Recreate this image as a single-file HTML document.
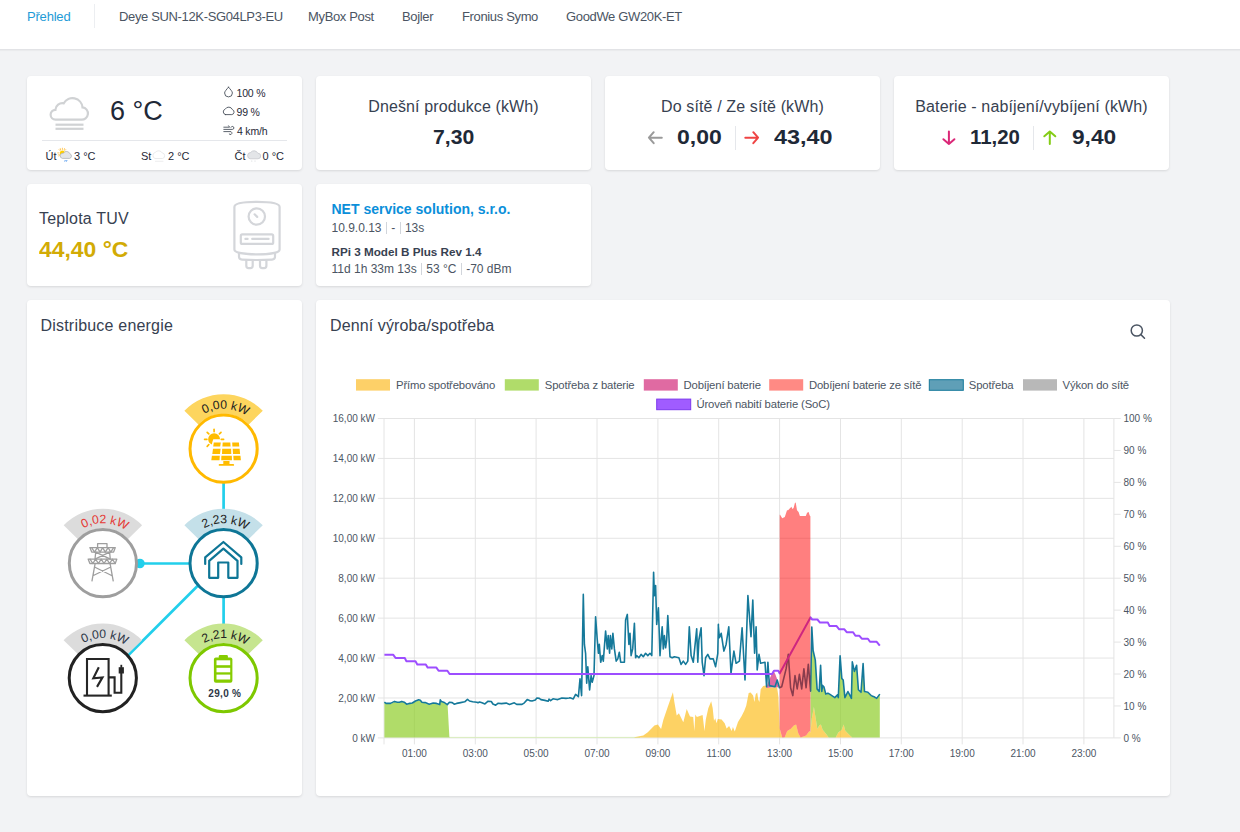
<!DOCTYPE html>
<html><head><meta charset="utf-8"><title>Přehled</title>
<style>
*{box-sizing:border-box}
html,body{margin:0;padding:0;width:1240px;height:832px;overflow:hidden;background:#f2f3f5;font-family:"Liberation Sans", sans-serif;color:#1f2937}
.hdr{position:absolute;left:0;top:0;width:1240px;height:50px;background:#fff;border-bottom:1px solid #e2e3e6;box-shadow:0 1px 1px rgba(0,0,0,.03)}
.nav{position:absolute;top:9px;font-size:13px;line-height:15px;color:#4b5563;white-space:nowrap;letter-spacing:-0.35px}
.sep{position:absolute;left:94px;top:4px;width:1px;height:24px;background:#eceef1}
.card{position:absolute;background:#fff;border-radius:4px;box-shadow:0 1px 3px rgba(0,0,0,.08),0 1px 2px rgba(0,0,0,.04)}
.t{position:absolute;white-space:nowrap}
.title{font-size:16px;line-height:17px;color:#374151;letter-spacing:0.12px}
.val{font-size:20px;line-height:22px;font-weight:700;color:#1f2937;letter-spacing:1.6px}
svg text{font-family:"Liberation Sans", sans-serif}
.vs{display:inline-block;width:1px;height:12px;background:#d1d5db;vertical-align:-2px;margin:0 1px}
</style></head><body>
<div class="hdr">
<div class="nav" style="left:27px;color:#1e9bd7;letter-spacing:-0.2px">Přehled</div>
<div class="sep"></div>
<div class="nav" style="left:119px">Deye SUN-12K-SG04LP3-EU</div>
<div class="nav" style="left:308px">MyBox Post</div>
<div class="nav" style="left:402px">Bojler</div>
<div class="nav" style="left:462px">Fronius Symo</div>
<div class="nav" style="left:566px">GoodWe GW20K-ET</div>
</div>

<div class="card" style="left:27px;top:76px;width:275px;height:94px"></div>
<div class="card" style="left:316px;top:76px;width:275px;height:94px"></div>
<div class="card" style="left:605px;top:76px;width:275px;height:94px"></div>
<div class="card" style="left:894px;top:76px;width:275px;height:94px"></div>
<div class="card" style="left:27px;top:184px;width:275px;height:102px"></div>
<div class="card" style="left:316px;top:184px;width:275px;height:102px"></div>
<div class="card" style="left:27px;top:299.5px;width:275px;height:496.5px"></div>
<div class="card" style="left:316px;top:299.5px;width:854px;height:496.5px"></div>

<!-- weather -->
<div class="t" style="left:110px;top:96px;font-size:27px;line-height:30px;color:#1f2937">6 °C</div>
<div class="t" style="left:236.5px;top:86.5px;font-size:10.5px;line-height:12px;color:#1f2937;letter-spacing:-0.2px">100 %</div>
<div class="t" style="left:236.5px;top:105.5px;font-size:10.5px;line-height:12px;color:#1f2937;letter-spacing:-0.2px">99 %</div>
<div class="t" style="left:237px;top:124.5px;font-size:10.5px;line-height:12px;color:#1f2937;letter-spacing:-0.2px">4 km/h</div>
<div style="position:absolute;left:42px;top:140px;width:245px;height:1px;background:#e5e7eb"></div>
<div class="t" style="left:45.5px;top:149.8px;font-size:11px;line-height:13px;color:#1f2937">Út</div>
<div class="t" style="left:74px;top:149.8px;font-size:11px;line-height:13px;color:#1f2937">3 °C</div>
<div class="t" style="left:141px;top:149.8px;font-size:11px;line-height:13px;color:#1f2937">St</div>
<div class="t" style="left:168px;top:149.8px;font-size:11px;line-height:13px;color:#1f2937">2 °C</div>
<div class="t" style="left:234.5px;top:149.8px;font-size:11px;line-height:13px;color:#1f2937">Čt</div>
<div class="t" style="left:262.5px;top:149.8px;font-size:11px;line-height:13px;color:#1f2937">0 °C</div>

<!-- stats -->
<div class="t title" style="left:316px;width:275px;text-align:center;top:98px">Dnešní produkce (kWh)</div>
<div class="t val" style="left:433px;top:126px;letter-spacing:0;transform:scaleX(1.06);transform-origin:0 0">7,30</div>
<div class="t title" style="left:605px;width:275px;text-align:center;top:98px">Do sítě / Ze sítě (kWh)</div>
<div class="t val" style="left:676.5px;top:126px;letter-spacing:0;transform:scaleX(1.15);transform-origin:0 0">0,00</div>
<div class="t val" style="left:774px;top:126px;letter-spacing:0;transform:scaleX(1.17);transform-origin:0 0">43,40</div>
<div style="position:absolute;left:735px;top:125.5px;width:1px;height:24px;background:#e5e7eb"></div>
<div class="t title" style="left:894px;width:275px;text-align:center;top:98px">Baterie - nabíjení/vybíjení (kWh)</div>
<div class="t val" style="left:970px;top:126px;letter-spacing:0;transform:scaleX(1.02);transform-origin:0 0">11,20</div>
<div class="t val" style="left:1071.5px;top:126px;letter-spacing:0;transform:scaleX(1.135);transform-origin:0 0">9,40</div>
<div style="position:absolute;left:1033px;top:125.5px;width:1px;height:24px;background:#e5e7eb"></div>

<div class="t" style="left:39px;top:209.5px;font-size:16px;line-height:18px;color:#374151;letter-spacing:0.18px">Teplota TUV</div>
<div class="t val" style="left:38.5px;top:238.5px;font-size:21.5px;color:#d2ab05;letter-spacing:0;transform:scaleX(1.065);transform-origin:0 0">44,40 °C</div>

<div class="t" style="left:331.5px;top:201px;font-size:14px;line-height:16px;font-weight:700;color:#0b8fda">NET service solution, s.r.o.</div>
<div class="t" style="left:331.5px;top:220.5px;font-size:12px;line-height:14px;color:#4b5563">10.9.0.13 <span class="vs"></span> - <span class="vs"></span> 13s</div>
<div class="t" style="left:331.5px;top:244.5px;font-size:11.7px;line-height:14px;font-weight:700;color:#374151">RPi 3 Model B Plus Rev 1.4</div>
<div class="t" style="left:331.5px;top:261.5px;font-size:12px;line-height:14px;color:#4b5563">11d 1h 33m 13s <span class="vs"></span> 53 °C <span class="vs"></span> -70 dBm</div>

<div class="t title" style="left:40.5px;top:317px;letter-spacing:0.2px">Distribuce energie</div>
<div class="t title" style="left:330px;top:317px;letter-spacing:0.11px">Denní výroba/spotřeba</div>

<svg width="1240" height="832" style="position:absolute;left:0;top:0">
<!-- weather icons -->
<g fill="none" stroke="#d0d2d4" stroke-width="2.2" stroke-linecap="round">
<path d="M55.6,119.6 H81.1 A6.1,6.1 0 0 0 82.5,107.4 A10,10 0 0 0 63.8,103.3 A7,7 0 0 0 55.4,109.8 A4.9,4.9 0 0 0 55.6,119.6 Z"/>
<line x1="55.5" y1="124.7" x2="83.5" y2="124.7" stroke-linecap="butt"/><line x1="55.5" y1="128.8" x2="83.5" y2="128.8" stroke-linecap="butt"/>
</g>
<g fill="none" stroke="#3f4753" stroke-width="0.85" stroke-linecap="round">
<path d="M228.5,87.2 C226.5,89.5 224.6,91.5 224.6,93 A3.9,3.9 0 0 0 232.4,93 C232.4,91.5 230.5,89.5 228.5,87.2 Z"/>
<path d="M225.5,114.6 H231.8 A2.6,2.6 0 0 0 232.4,109.6 A4,4 0 0 0 225.2,109.2 A2.8,2.8 0 0 0 225.5,114.6 Z"/>
<path d="M223.8,127.2 H229.6 L228.6,125.8 M223.8,129.4 H232.4 A1.5,1.5 0 1 0 231,127.3 M223.8,131.6 H230 A1.5,1.5 0 1 1 229.2,134"/>
</g>
<g stroke="#ffc34d" stroke-width="0.9" stroke-linecap="round">
<line x1="62.4" y1="149.5" x2="62.4" y2="148.2"/><line x1="59" y1="152.9" x2="57.7" y2="152.9"/><line x1="60" y1="150.5" x2="59.1" y2="149.6"/><line x1="64.8" y1="150.5" x2="65.7" y2="149.6"/><line x1="60" y1="155.3" x2="59.1" y2="156.2"/><line x1="60.6" y1="149.8" x2="60.3" y2="148.6"/><line x1="64.2" y1="149.8" x2="64.5" y2="148.6"/><line x1="59.3" y1="154.6" x2="58.2" y2="155"/>
</g>
<circle cx="62.4" cy="152.9" r="2.5" fill="#ffcf00"/>
<path d="M62.4,158.4 H69.6 A2.4,2.4 0 0 0 69.9,153.8 A3.6,3.6 0 0 0 63.4,153.2 A2.6,2.6 0 0 0 62.4,158.4 Z" fill="#e3e5e8" stroke="#a9adb2" stroke-width="0.7"/>
<line x1="64.7" y1="161.6" x2="65.3" y2="160" stroke="#5b9ff0" stroke-width="1"/><line x1="66.4" y1="161.6" x2="67" y2="160" stroke="#5b9ff0" stroke-width="1"/>
<path d="M155,158.5 H162.5 A2.8,2.8 0 0 0 162.3,153 A4.2,4.2 0 0 0 155.3,152.4 A3.2,3.2 0 0 0 155,158.5 Z" fill="none" stroke="#e3e4e6" stroke-width="0.8"/>
<line x1="155" y1="161.3" x2="163.4" y2="161.3" stroke="#e8e9eb" stroke-width="0.8"/>
<path d="M250,158.8 H258 A2.8,2.8 0 0 0 257.8,153.2 A4.2,4.2 0 0 0 250.6,152.5 A3.2,3.2 0 0 0 250,158.8 Z" fill="#e3e5e8" stroke="#b8bcc2" stroke-width="0.6"/>
<circle cx="251.8" cy="161" r="0.5" fill="#c8ccd0"/><circle cx="255" cy="161" r="0.5" fill="#c8ccd0"/>
</g>
<!-- arrows -->
<g fill="none" stroke-width="2" stroke-linecap="round" stroke-linejoin="round">
<path d="M661.8,137.7 H649 M653.7,132.2 L648.9,137.7 L653.7,143.2" stroke="#9a9a9a"/>
<path d="M745.3,137.7 H758 M753.3,132.2 L758.1,137.7 L753.3,143.2" stroke="#ef4444"/>
<path d="M948.9,131.5 V144 M943.4,139.2 L948.9,144 L954.4,139.2" stroke="#db2777"/>
<path d="M1049.8,144 V131.5 M1044.3,136.3 L1049.8,131.5 L1055.3,136.3" stroke="#84cc16"/>
</g>
<!-- boiler -->
<g fill="none" stroke="#d4d6da" stroke-width="2.2" stroke-linejoin="round" stroke-linecap="round">
<path d="M234.4,249.5 V207 C234.4,203.3 245,201.9 257,201.9 C269,201.9 279.6,203.3 279.6,207 V249.5 C279.6,252.8 269,254.4 257,254.4 C245,254.4 234.4,252.8 234.4,249.5 Z"/>
<circle cx="256.8" cy="216.5" r="8.2"/><line x1="254.6" y1="214.3" x2="257.2" y2="216.9"/>
<rect x="240.8" y="234.4" width="32.4" height="9.5" rx="1.5"/><line x1="245.4" y1="238.9" x2="247.6" y2="238.9"/><line x1="252.2" y1="238.9" x2="268.6" y2="238.9"/>
<path d="M239,253.3 V256.8 Q239,259.4 242,259.6 Q257,260.4 272,259.6 Q275,259.4 275,256.8 V253.3"/>
<path d="M246.3,260.2 V265.8 Q246.3,268.1 248.6,268.1 H250.4 Q252.7,268.1 252.7,265.8 V260.2 M260,260.2 V265.8 Q260,268.1 262.3,268.1 H264.1 Q266.4,268.1 266.4,265.8 V260.2"/>
</g>
<!-- search -->
<g fill="none" stroke="#4b5563" stroke-width="1.5" stroke-linecap="round"><circle cx="1136.8" cy="330.5" r="5.6"/><line x1="1140.9" y1="334.6" x2="1144.5" y2="338.2"/></g>

<!-- distribution -->
<line x1="223.6" y1="483" x2="223.6" y2="512" stroke="#22cfeb" stroke-width="2.7"/>
<line x1="137" y1="563.5" x2="190" y2="563.5" stroke="#22cfeb" stroke-width="2.7"/>
<circle cx="139.9" cy="563.5" r="4.8" fill="#22cfeb"/>
<line x1="223.6" y1="596" x2="223.6" y2="626" stroke="#22cfeb" stroke-width="2.7"/>
<line x1="198" y1="585.5" x2="128" y2="655.5" stroke="#22cfeb" stroke-width="2.7"/>
<path d="M184.40,410.84 A54.5,54.5 0 0 1 262.80,410.84 L248.78,424.39 A35,35 0 0 0 198.42,424.39 Z" fill="#fdd55e"/><path id="arc223448" d="M186.01,435.02 A40,40 0 0 1 261.19,435.02" fill="none"/><text font-size="12.2" fill="#222" font-family='"Liberation Sans", sans-serif'><textPath href="#arc223448" startOffset="52%" text-anchor="middle">0,00 kW</textPath></text><circle cx="223.6" cy="448.7" r="33.6" fill="#fff" stroke="#ffb900" stroke-width="3"/>
<path d="M63.70,525.34 A54.5,54.5 0 0 1 142.10,525.34 L128.08,538.89 A35,35 0 0 0 77.72,538.89 Z" fill="#dcdcdc"/><path id="arc102563" d="M65.31,549.52 A40,40 0 0 1 140.49,549.52" fill="none"/><text font-size="12.2" fill="#e53935" font-family='"Liberation Sans", sans-serif'><textPath href="#arc102563" startOffset="52%" text-anchor="middle">0,02 kW</textPath></text><circle cx="102.9" cy="563.2" r="33.6" fill="#fff" stroke="#9e9e9e" stroke-width="3"/>
<path d="M184.40,525.34 A54.5,54.5 0 0 1 262.80,525.34 L248.78,538.89 A35,35 0 0 0 198.42,538.89 Z" fill="#c4e0e9"/><path id="arc223563" d="M186.01,549.52 A40,40 0 0 1 261.19,549.52" fill="none"/><text font-size="12.2" fill="#222" font-family='"Liberation Sans", sans-serif'><textPath href="#arc223563" startOffset="52%" text-anchor="middle">2,23 kW</textPath></text><circle cx="223.6" cy="563.2" r="33.6" fill="#fff" stroke="#0e7696" stroke-width="3"/>
<path d="M63.60,640.24 A54.5,54.5 0 0 1 142.00,640.24 L127.98,653.79 A35,35 0 0 0 77.62,653.79 Z" fill="#dcdcdc"/><path id="arc102678" d="M65.21,664.42 A40,40 0 0 1 140.39,664.42" fill="none"/><text font-size="12.2" fill="#2d3748" font-family='"Liberation Sans", sans-serif'><textPath href="#arc102678" startOffset="52%" text-anchor="middle">0,00 kW</textPath></text><circle cx="102.8" cy="678.1" r="33.6" fill="#fff" stroke="#222222" stroke-width="3"/>
<path d="M184.40,640.24 A54.5,54.5 0 0 1 262.80,640.24 L248.78,653.79 A35,35 0 0 0 198.42,653.79 Z" fill="#c6e58f"/><path id="arc223678" d="M186.01,664.42 A40,40 0 0 1 261.19,664.42" fill="none"/><text font-size="12.2" fill="#222" font-family='"Liberation Sans", sans-serif'><textPath href="#arc223678" startOffset="52%" text-anchor="middle">2,21 kW</textPath></text><circle cx="223.6" cy="678.1" r="33.6" fill="#fff" stroke="#7ec800" stroke-width="3"/>
<g fill="#ffbc00">
<path d="M208.15,439.3 A5.95,5.95 0 0 1 220.05,439.3 L213.3,439.3 L212.5,441.5 L211.8,444.5 A5.95,5.95 0 0 1 208.15,439.3 Z"/>
<path d="M213.8,442.6 H220.8 L220.2,446.6 H213.2 Z M222.7,442.6 H230.3 L230.6,446.6 H222.4 Z M232.2,442.6 H238.9 L239.3,446.6 H232.4 Z"/>
<path d="M213.0,448.8 H220.6 L220.0,453.9 H212.3 Z M222.2,448.8 H231.1 L231.3,453.9 H222.0 Z M232.7,448.8 H239.6 L240.1,453.9 H233.0 Z"/>
<path d="M211.9,455.8 H219.8 L219.5,460.2 H211.3 Z M221.4,455.8 H231.8 L232.0,460.2 H221.2 Z M233.3,455.8 H240.5 L240.9,460.2 H233.6 Z"/>
<rect x="223.3" y="461" width="6.2" height="3.2"/><rect x="218.7" y="463.9" width="15.4" height="1.9" rx="0.9"/>
</g>
<g stroke="#ffbc00" stroke-width="1.7" stroke-linecap="round">
<line x1="214.1" y1="429.3" x2="214.1" y2="431.6"/><line x1="207.2" y1="432.3" x2="208.8" y2="433.9"/>
<line x1="221" y1="432.3" x2="219.4" y2="433.9"/><line x1="204.6" y1="439.3" x2="206.9" y2="439.3"/>
<line x1="221.3" y1="439.3" x2="223.6" y2="439.3"/><line x1="207.2" y1="446.3" x2="208.8" y2="444.7"/>
</g>
<g fill="none" stroke="#9e9e9e" stroke-width="1.3" stroke-linejoin="round" stroke-linecap="round">
<path d="M97.6,547.4 V543.7 H107 V547.4"/>
<path d="M89.9,547.6 H115.3 L113.6,552.1 H91.7 Z"/>
<path d="M91.7,547.6 L94.5,552.1 L97.3,547.6 L100.1,552.1 L102.6,547.6 L105.3,552.1 L108.1,547.6 L110.8,552.1 L113.6,547.6"/>
<path d="M88.2,559.2 H116.8 L115.2,563.5 H89.9 Z"/>
<path d="M90,559.2 L92.8,563.5 L95.6,559.2 L98.4,563.5 L101.2,559.2 L104,563.5 L106.8,559.2 L109.6,563.5 L112.4,559.2 L115.2,563.5"/>
<path d="M95.7,552.1 L95,559.2 M109.6,552.1 L110.3,559.2 M95.7,552.1 L110.3,559.2 M109.6,552.1 L95,559.2"/>
<path d="M95.1,563.6 L92,580.8 M110.1,563.6 L113.2,580.8 M94.5,567 L111.6,575.5 M110.8,567 L93.4,575.5"/>
</g>
<g fill="none" stroke="#0e7696" stroke-width="2.2" stroke-linejoin="round" stroke-linecap="round">
<path d="M205.2,564 V557.3 L223.4,542 L241.3,557.3 V564"/>
<path d="M209.2,577.8 V560.8 L223.4,548.7 L237.5,560.8 V577.8 H228.3 V562.5 H218.2 V577.8 Z"/>
</g>
<g fill="none" stroke="#262626" stroke-width="2.1" stroke-linejoin="miter">
<path d="M87,695.3 V659 H108.6 V695.3"/>
<path d="M83.5,695.6 H111.8"/>
<path d="M98.8,667.3 L93.3,678.2 L102.5,677.4 L97,686.9"/>
<path d="M108.6,677.4 H114.6 V692.7 H121.3 V672"/>
</g>
<rect x="118.7" y="667.2" width="5.2" height="6.3" fill="#262626"/><rect x="120.4" y="664.8" width="1.8" height="3" fill="#262626"/>
<g fill="#86cc00"><rect x="213.9" y="657.4" width="18.5" height="25.3" rx="2"/><rect x="218.8" y="655.1" width="9.1" height="3.5" rx="1.2"/></g>
<g fill="#fff"><rect x="216.5" y="660.3" width="13.7" height="4.9"/><rect x="216.5" y="667.8" width="13.7" height="4.5"/><rect x="216.5" y="674.6" width="13.7" height="4.9"/></g>
<text x="224.8" y="696.6" text-anchor="middle" font-size="10" font-weight="700" style="letter-spacing:0.3px" fill="#2d3748" font-family='"Liberation Sans", sans-serif'>29,0 %</text>

<!-- legend -->
<g font-size="11.3" fill="#4b5563" style="letter-spacing:-0.15px">
<rect x="356" y="379.2" width="34" height="11.4" fill="#fdd068"/><text x="396" y="388.9">Přímo spotřebováno</text>
<rect x="504.8" y="379.2" width="34" height="11.4" fill="#b0dc6a"/><text x="544.8" y="388.9">Spotřeba z baterie</text>
<rect x="643.8" y="379.2" width="34" height="11.4" fill="#e06aa2"/><text x="683.5" y="388.9">Dobíjení baterie</text>
<rect x="769.2" y="379.2" width="34" height="11.4" fill="#ff8a84"/><text x="808.9" y="388.9">Dobíjení baterie ze sítě</text>
<rect x="929.3" y="379.7" width="34" height="10.6" fill="#5f9fb7" stroke="#15799a" stroke-width="1"/><text x="968.8" y="388.9">Spotřeba</text>
<rect x="1023" y="379.2" width="34" height="11.4" fill="#b8b8b8"/><text x="1062.5" y="388.9">Výkon do sítě</text>
<rect x="656.7" y="399.1" width="34" height="10.6" fill="#a05cff" stroke="#7c3aed" stroke-width="1"/><text x="696.4" y="408.4">Úroveň nabití baterie (SoC)</text>
</g>
<!-- grid -->
<g stroke="#e4e4e4" stroke-width="1">
<line x1="377.8" y1="418.5" x2="1113.9" y2="418.5"/>
<line x1="377.8" y1="458.425" x2="1113.9" y2="458.425"/>
<line x1="377.8" y1="498.35" x2="1113.9" y2="498.35"/>
<line x1="377.8" y1="538.275" x2="1113.9" y2="538.275"/>
<line x1="377.8" y1="578.2" x2="1113.9" y2="578.2"/>
<line x1="377.8" y1="618.125" x2="1113.9" y2="618.125"/>
<line x1="377.8" y1="658.05" x2="1113.9" y2="658.05"/>
<line x1="377.8" y1="697.9749999999999" x2="1113.9" y2="697.9749999999999"/>
<line x1="377.8" y1="737.9" x2="1113.9" y2="737.9"/>
<line x1="384.0" y1="418.5" x2="384.0" y2="744.4"/>
<line x1="414.4" y1="418.5" x2="414.4" y2="744.4"/>
<line x1="475.3" y1="418.5" x2="475.3" y2="744.4"/>
<line x1="536.1" y1="418.5" x2="536.1" y2="744.4"/>
<line x1="597.0" y1="418.5" x2="597.0" y2="744.4"/>
<line x1="657.9" y1="418.5" x2="657.9" y2="744.4"/>
<line x1="718.7" y1="418.5" x2="718.7" y2="744.4"/>
<line x1="779.6" y1="418.5" x2="779.6" y2="744.4"/>
<line x1="840.5" y1="418.5" x2="840.5" y2="744.4"/>
<line x1="901.3" y1="418.5" x2="901.3" y2="744.4"/>
<line x1="962.2" y1="418.5" x2="962.2" y2="744.4"/>
<line x1="1023.0" y1="418.5" x2="1023.0" y2="744.4"/>
<line x1="1083.9" y1="418.5" x2="1083.9" y2="744.4"/>
<line x1="1113.9" y1="418.5" x2="1113.9" y2="737.9"/>
<line x1="1113.9" y1="737.9" x2="1120.7" y2="737.9"/>
<line x1="1113.9" y1="705.9599999999999" x2="1120.7" y2="705.9599999999999"/>
<line x1="1113.9" y1="674.02" x2="1120.7" y2="674.02"/>
<line x1="1113.9" y1="642.0799999999999" x2="1120.7" y2="642.0799999999999"/>
<line x1="1113.9" y1="610.14" x2="1120.7" y2="610.14"/>
<line x1="1113.9" y1="578.1999999999999" x2="1120.7" y2="578.1999999999999"/>
<line x1="1113.9" y1="546.26" x2="1120.7" y2="546.26"/>
<line x1="1113.9" y1="514.3199999999999" x2="1120.7" y2="514.3199999999999"/>
<line x1="1113.9" y1="482.38" x2="1120.7" y2="482.38"/>
<line x1="1113.9" y1="450.43999999999994" x2="1120.7" y2="450.43999999999994"/>
<line x1="1113.9" y1="418.49999999999994" x2="1120.7" y2="418.49999999999994"/>
</g>
<g font-size="10" fill="#4b5563">
<text x="375" y="422.2" text-anchor="end">16,00 kW</text>
<text x="375" y="462.1" text-anchor="end">14,00 kW</text>
<text x="375" y="502.1" text-anchor="end">12,00 kW</text>
<text x="375" y="542.0" text-anchor="end">10,00 kW</text>
<text x="375" y="581.9" text-anchor="end">8,00 kW</text>
<text x="375" y="621.8" text-anchor="end">6,00 kW</text>
<text x="375" y="661.8" text-anchor="end">4,00 kW</text>
<text x="375" y="701.7" text-anchor="end">2,00 kW</text>
<text x="375" y="741.6" text-anchor="end">0 kW</text>
<text x="414.4" y="757" text-anchor="middle">01:00</text>
<text x="475.3" y="757" text-anchor="middle">03:00</text>
<text x="536.1" y="757" text-anchor="middle">05:00</text>
<text x="597.0" y="757" text-anchor="middle">07:00</text>
<text x="657.9" y="757" text-anchor="middle">09:00</text>
<text x="718.7" y="757" text-anchor="middle">11:00</text>
<text x="779.6" y="757" text-anchor="middle">13:00</text>
<text x="840.5" y="757" text-anchor="middle">15:00</text>
<text x="901.3" y="757" text-anchor="middle">17:00</text>
<text x="962.2" y="757" text-anchor="middle">19:00</text>
<text x="1023.0" y="757" text-anchor="middle">21:00</text>
<text x="1083.9" y="757" text-anchor="middle">23:00</text>
<text x="1123.5" y="741.6">0 %</text>
<text x="1123.5" y="709.7">10 %</text>
<text x="1123.5" y="677.7">20 %</text>
<text x="1123.5" y="645.8">30 %</text>
<text x="1123.5" y="613.8">40 %</text>
<text x="1123.5" y="581.9">50 %</text>
<text x="1123.5" y="550.0">60 %</text>
<text x="1123.5" y="518.0">70 %</text>
<text x="1123.5" y="486.1">80 %</text>
<text x="1123.5" y="454.1">90 %</text>
<text x="1123.5" y="422.2">100 %</text>
</g>
<!-- data -->
<line x1="449" y1="737.4" x2="640" y2="737.4" stroke="#d9ecbd" stroke-width="1"/>
<polygon points="634.4,737.6 634.4,737.3 643.3,735.6 647.8,732.2 654.4,725.6 657.8,724.4 661.1,728.9 663.3,720.0 667.8,706.7 672.9,692.2 674.4,702.2 676.7,715.6 678.9,713.3 681.1,717.8 683.3,722.2 686.7,708.9 690.0,716.4 693.2,717.0 694.4,730.9 695.3,714.5 696.9,717.0 702.6,715.1 704.5,730.9 705.8,719.5 708.3,708.2 711.2,701.2 712.7,708.2 714.0,720.8 715.3,718.3 716.5,723.3 717.8,718.9 721.6,719.5 724.7,723.3 726.6,728.4 729.1,725.9 731.7,730.9 732.9,727.1 734.8,731.5 738.0,722.1 741.8,715.8 744.3,710.7 746.2,705.7 748.7,693.0 750.6,692.4 753.1,695.6 754.4,701.9 755.7,694.3 757.2,692.4 758.2,699.3 759.4,701.9 760.7,689.2 763.2,686.1 765.8,685.5 767.0,688.0 772.1,687.3 777.1,687.3 778.4,696.8 779.6,728.4 782.2,737.6 784.7,737.2 787.2,730.9 790.6,728.9 793.9,725.6 796.1,724.4 798.3,733.3 800.6,737.6 806.1,735.6 809.4,731.1 810.5,732.4 811.8,718.5 813.9,707.1 815.7,718.5 817.4,728.9 819.2,725.4 820.9,724.6 822.6,729.8 826.1,734.1 828.7,737.6 835.7,737.6 838.3,732.4 841.8,729.8 843.6,724.6 845.3,730.7 847.0,732.4 850.5,735.9 852.3,737.6 852.3,737.6" fill="rgba(252,192,40,0.72)"/>
<polygon points="384.4,737.6 384.4,702.8 386.0,704.0 390.5,704.0 394.5,702.0 397.3,702.8 399.4,702.8 401.8,702.0 404.2,702.8 406.6,704.8 409.8,704.0 412.3,703.6 415.5,701.6 418.7,700.4 420.3,700.8 421.9,702.8 425.2,703.2 429.2,704.8 433.2,703.6 436.5,704.0 439.7,705.2 440.3,700.4 441.3,702.0 443.7,702.8 447.3,705.2 447.6,704.9 449.4,737.6" fill="rgba(142,205,42,0.7)"/>
<polygon points="810.5,691.0 810.6,691.7 811.8,627.6 813.1,651.1 815.3,660.7 817.1,689.5 819.2,692.1 820.6,665.9 821.8,692.1 822.6,686.0 824.0,687.7 825.8,694.7 827.9,693.8 829.6,694.7 832.2,696.4 834.8,698.2 837.5,695.5 838.3,698.2 840.1,656.3 841.8,679.0 843.2,680.7 844.9,698.2 847.9,692.1 849.7,695.5 851.4,699.0 852.3,662.4 854.4,672.0 856.6,665.9 858.4,690.3 861.0,692.9 863.1,664.2 864.5,692.1 867.9,692.9 871.4,696.4 874.0,697.3 876.7,699.0 879.8,694.7 879.8,737.6 852.3,737.6 850.5,735.9 847.0,732.4 845.3,730.7 843.6,724.6 841.8,729.8 838.3,732.4 835.7,737.6 828.7,737.6 826.1,734.1 822.6,729.8 820.9,724.6 819.2,725.4 817.4,728.9 815.7,718.5 813.9,707.1 811.8,718.5 810.5,731.9" fill="rgba(142,205,42,0.7)"/>
<polygon points="766.4,687.3 768.9,680.4 773.3,670.3 775.2,674.1 777.1,679.1 778.4,687.3 777.1,687.3 772.1,687.3 767.0,688.0" fill="#e06aa2"/>
<polyline points="384.4,702.2 386.0,703.4 390.5,703.4 394.5,701.4 397.3,702.2 399.4,702.2 401.8,701.4 404.2,702.2 406.6,704.2 409.8,703.4 412.3,703.0 415.5,701.0 418.7,699.8 420.3,700.2 421.9,702.2 425.2,702.6 429.2,704.2 433.2,703.0 436.5,703.4 439.7,704.6 440.3,699.8 441.3,701.4 443.7,702.2 447.3,704.6 449.4,702.2 452.2,702.6 454.2,704.2 456.6,703.4 460.6,702.6 464.7,701.8 467.5,699.4 469.5,701.0 472.7,701.8 476.8,702.2 478.0,702.8 479.6,702.0 482.0,702.8 484.9,703.9 488.1,701.2 491.3,701.5 492.9,704.0 495.7,705.2 498.2,703.2 501.4,703.6 506.2,703.1 509.5,704.4 514.3,702.8 516.7,704.4 522.0,704.4 524.4,702.8 527.2,699.6 529.6,700.6 532.0,701.0 535.3,700.0 536.9,698.0 539.3,698.4 540.9,699.6 544.9,700.4 548.2,701.2 549.0,699.2 550.6,700.6 553.0,698.8 555.4,699.2 557.8,699.6 561.9,698.0 565.9,698.4 569.1,698.0 570.0,697.8 573.3,698.9 575.6,694.4 578.4,696.7 580.0,678.9 581.6,695.6 583.3,594.4 584.4,644.4 585.6,653.3 586.7,683.3 587.8,666.7 589.6,690.0 591.1,675.6 592.2,682.2 594.0,675.6 595.6,616.7 597.1,637.8 598.4,653.3 599.3,644.4 600.7,662.2 602.2,655.6 603.3,661.1 605.6,631.1 607.3,648.9 608.2,635.6 609.6,653.3 610.4,635.6 611.8,648.9 612.9,633.3 614.4,648.9 616.2,661.1 617.8,658.9 619.3,652.2 620.7,662.2 624.4,662.2 625.6,620.0 627.3,614.4 628.9,644.4 630.0,633.3 631.1,655.6 632.7,648.9 634.4,623.3 635.6,657.8 636.7,655.6 638.9,657.8 641.1,654.4 643.3,656.7 645.6,653.3 647.8,655.6 650.0,653.3 651.8,655.6 653.6,572.2 654.4,595.6 655.6,585.6 656.7,624.4 658.4,607.8 660.0,655.6 661.1,640.0 662.2,626.7 663.3,648.9 664.4,635.6 665.6,647.8 666.7,640.0 667.8,615.6 670.0,656.7 672.2,657.8 674.4,656.7 678.9,657.8 681.1,664.4 683.3,661.1 685.6,664.4 687.8,661.1 689.3,626.7 691.1,655.6 693.3,662.2 696.7,628.9 697.8,662.2 698.9,640.0 701.1,627.8 702.2,662.2 704.0,675.6 705.6,657.8 707.8,654.4 710.0,658.9 713.3,658.9 715.6,666.7 717.8,653.3 718.4,624.4 718.3,625.6 719.4,637.8 721.2,633.3 723.9,651.1 726.1,644.4 728.8,626.7 731.0,673.3 733.9,651.1 736.1,663.3 739.4,661.1 742.1,627.8 745.0,680.0 747.9,595.6 749.4,615.6 751.0,636.7 752.8,600.0 754.6,653.3 756.1,626.7 757.2,670.0 759.0,654.4 760.6,663.3 765.0,662.2 766.6,686.7 767.9,662.2 769.4,685.6 775.0,686.7 777.2,680.0 779.4,687.8 781.7,686.7 786.1,668.9 788.3,654.4 790.6,687.8 792.8,695.6 795.0,675.6 797.2,688.9 799.4,674.4 801.7,688.9 803.9,668.9 806.1,687.8 808.3,664.4 810.6,691.1 811.8,627.0 813.1,650.5 815.3,660.1 817.1,688.9 819.2,691.5 820.6,665.3 821.8,691.5 822.6,685.4 824.0,687.1 825.8,694.1 827.9,693.2 829.6,694.1 832.2,695.8 834.8,697.6 837.5,694.9 838.3,697.6 840.1,655.7 841.8,678.4 843.2,680.1 844.9,697.6 847.9,691.5 849.7,694.9 851.4,698.4 852.3,661.8 854.4,671.4 856.6,665.3 858.4,689.7 861.0,692.3 863.1,663.6 864.5,691.5 867.9,692.3 871.4,695.8 874.0,696.7 876.7,698.4 879.8,694.1" fill="none" stroke="#15799a" stroke-width="1.6" stroke-linejoin="round"/>
<polyline points="384.4,654.8 393.3,654.8 395.6,658.0 404.8,658.0 406.3,661.2 415.5,661.2 417.3,664.4 425.8,664.4 427.6,667.6 436.4,667.6 438.6,670.8 447.4,670.8 449.6,674.0 772.1,674.0 774.0,670.8 778.4,670.8 779.6,673.4 810.5,617.4 812.2,619.5 817.4,619.5 820.0,622.6 827.9,622.6 829.6,626.1 836.6,626.1 839.2,629.3 844.4,629.3 846.7,632.2 853.1,632.2 855.4,635.7 859.2,635.7 861.8,638.7 867.9,638.7 870.0,641.8 876.7,641.8 879.8,645.6" fill="none" stroke="#9d4dff" stroke-width="2" stroke-linejoin="round"/>
<polygon points="779.7,514.8 780.1,514.8 782.2,518.2 784.8,516.9 787.0,510.2 788.1,510.2 790.2,508.1 791.5,506.8 792.3,508.9 793.6,508.1 794.9,503.0 795.7,502.6 797.0,510.2 798.6,511.9 799.9,516.1 805.8,516.1 807.1,512.7 808.7,511.9 809.6,515.2 810.4,516.2 810.4,732.3 809.4,731.1 806.1,735.6 800.6,737.6 798.3,733.3 796.1,724.4 793.9,725.6 790.6,728.9 787.2,730.9 784.7,737.2 782.2,737.6 779.7,728.6" fill="rgba(255,0,0,0.5)"/>
</svg>
</body></html>
